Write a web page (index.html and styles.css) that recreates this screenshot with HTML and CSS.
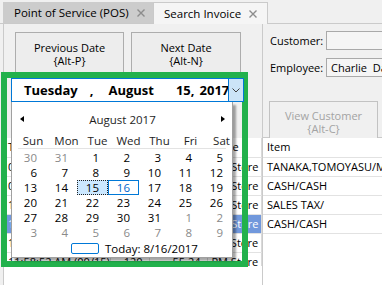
FILE: index.html
```html
<!DOCTYPE html>
<html lang="en">
<head>
    <meta charset="UTF-8">
    <title>Search Invoice</title>
    <link rel="stylesheet" href="styles.css">
</head>
<body>
    <!-- tab strip -->
    <div class="tabs">
        <div class="tab">
            <span>Point of Service (POS)</span>
            <svg class="close" width="8" height="8" viewBox="0 0 8 8"><path d="M0.5 0.5L7.5 7.5M7.5 0.5L0.5 7.5"/></svg>
        </div>
        <div class="tab active">
            <span>Search Invoice</span>
            <svg class="close" width="8" height="8" viewBox="0 0 8 8"><path d="M0.5 0.5L7.5 7.5M7.5 0.5L0.5 7.5"/></svg>
        </div>
    </div>

    <div class="main">
        <div class="left">
            <div class="toolbar">
                <button class="btn btn-prev">Previous Date<br>{Alt-P}</button>
                <button class="btn btn-next">Next Date<br>{Alt-N}</button>
            </div>
            <div class="grid-area">
                <div class="grid-clip">
                    <table class="grid invoices">
                        <colgroup>
                            <col class="c-time"><col class="c-qty"><col class="c-total"><col class="c-store">
                        </colgroup>
                        <tr class="head"><td>Time</td><td class="num">Qty</td><td class="num">Total</td><td>Store</td></tr>
                        <tr><td>09:02:11 AM (00/10)</td><td class="num">40</td><td class="num">12.10</td><td>AM Store</td></tr>
                        <tr><td>09:47:30 AM (00/11)</td><td class="num">65</td><td class="num">20.75</td><td>AM Store</td></tr>
                        <tr><td>10:15:04 AM (00/12)</td><td class="num">80</td><td class="num">31.40</td><td>AM Store</td></tr>
                        <tr class="selected"><td>11:03:46 AM (00/13)</td><td class="num">100</td><td class="num">44.00</td><td>AM Store</td></tr>
                        <tr><td>11:31:19 AM (00/14)</td><td class="num">110</td><td class="num">49.62</td><td>PM Store</td></tr>
                        <tr><td>11:58:52 AM (00/15)</td><td class="num">120</td><td class="num">55.24</td><td>PM Store</td></tr>
                    </table>
                </div>
            </div>
        </div>

        <div class="right">
            <div class="info">
                <div class="field">
                    <label>Customer:</label>
                    <div class="box"></div>
                </div>
                <div class="field">
                    <label>Employee:</label>
                    <div class="box">Charlie&nbsp; Davis</div>
                </div>
                <button class="btn btn-view" disabled>View Customer<br>{Alt-C}</button>
            </div>
            <div class="grid-area">
                <table class="grid items">
                    <tr class="head"><td>Item</td></tr>
                    <tr><td>TANAKA,TOMOYASU/MR</td></tr>
                    <tr><td>CASH/CASH</td></tr>
                    <tr><td>SALES TAX/</td></tr>
                    <tr><td>CASH/CASH</td></tr>
                </table>
            </div>
        </div>
    </div>

    <!-- green highlight frame -->
    <div class="highlight"></div>

    <!-- open date picker -->
    <div class="picker">
        <div class="datebox">
            <span class="d-day">Tuesday</span>
            <span class="d-comma">,</span>
            <span class="d-month">August</span>
            <span class="d-num">15,</span>
            <span class="d-year">2017</span>
            <div class="drop">
                <svg width="8" height="5" viewBox="0 0 8 5"><path d="M0.5 0.5L4 4L7.5 0.5"/></svg>
            </div>
        </div>
        <div class="cal">
            <div class="cal-head">
                <span class="arrow arrow-left"></span>
                <span class="title">August 2017</span>
                <span class="arrow arrow-right"></span>
            </div>
            <div class="days">
                <span>Sun</span><span>Mon</span><span>Tue</span><span>Wed</span><span>Thu</span><span>Fri</span><span>Sat</span>
            </div>
            <div class="dates">
                <span class="other">30</span><span class="other">31</span><span>1</span><span>2</span><span>3</span><span>4</span><span>5</span>
                <span>6</span><span>7</span><span>8</span><span>9</span><span>10</span><span>11</span><span>12</span>
                <span>13</span><span>14</span><span class="sel">15</span><span class="now">16</span><span>17</span><span>18</span><span>19</span>
                <span>20</span><span>21</span><span>22</span><span>23</span><span>24</span><span>25</span><span>26</span>
                <span>27</span><span>28</span><span>29</span><span>30</span><span>31</span><span class="other">1</span><span class="other">2</span>
                <span class="other">3</span><span class="other">4</span><span class="other">5</span><span class="other">6</span><span class="other">7</span><span class="other">8</span><span class="other">9</span>
            </div>
            <div class="today">
                <span class="today-box"></span>
                <span>Today: 8/16/2017</span>
            </div>
        </div>
    </div>
</body>
</html>
```

FILE: styles.css
```css
body {
    margin: 0;
    width: 382px;
    height: 285px;
    overflow: hidden;
    position: relative;
    background-color: #f0f0f0;
    font-family: "Open Sans", Arial, sans-serif;
    font-size: 11px;
    color: #000;
}

/* Tabs */
.tabs {
    display: flex;
    align-items: flex-end;
    height: 24px;
    box-sizing: border-box;
    padding-left: 3px;
    border-bottom: 1px solid #cacaca;
}

.tab {
    display: flex;
    align-items: center;
    justify-content: space-between;
    box-sizing: border-box;
    height: 21px;
    width: 150px;
    padding: 0 8px 0 11px;
    background-color: #cccccc;
    font-size: 11.5px;
}

.tab.active {
    width: 115px;
    height: 22px;
    margin-bottom: -1px;
    padding-right: 10px;
    background-color: #f5f5f5;
    border: 1px solid #cacaca;
    border-bottom: none;
    padding-left: 10px;
}

.close path {
    stroke: #8c8c8c;
    stroke-width: 1.4;
    fill: none;
}

/* Main area */
.main {
    display: flex;
    height: 261px;
    margin-left: 3px;
    border-left: 1px solid #cacaca;
}

.left {
    width: 258px;
    flex: none;
    display: flex;
    flex-direction: column;
}

.right {
    flex: 1;
    border-left: 1px solid #cacaca;
    overflow: hidden;
    display: flex;
    flex-direction: column;
}

.toolbar {
    display: flex;
    gap: 7px;
    align-items: flex-start;
    height: 114px;
    flex: none;
    box-sizing: border-box;
    padding: 8px 0 0 11px;
}

/* Buttons */
.btn {
    height: 43px;
    padding: 0;
    border: 1px solid #adadad;
    background-color: #ededed;
    font-family: inherit;
    font-size: 11px;
    line-height: 13px;
    color: #000;
    text-align: center;
}

.btn-prev {
    width: 109px;
}

.btn-next {
    width: 110px;
}

.btn-view {
    width: 109px;
    height: 41px;
    margin: 16px 0 0 -1px;
    border-color: #c2c2c2;
    background-color: #f0f0f0;
    color: #a3a3a3;
}

/* Customer panel */
.info {
    height: 114px;
    flex: none;
    box-sizing: border-box;
    padding: 7px 0 0 7px;
    border-bottom: 1px solid #cacaca;
}

.field {
    display: flex;
    align-items: center;
    height: 19px;
    margin-bottom: 8px;
}

.field label {
    width: 56px;
    flex: none;
}

.box {
    flex: none;
    width: 90px;
    height: 19px;
    box-sizing: border-box;
    border: 1px solid #a9a9a9;
    background-color: #f5f5f5;
    padding-left: 4px;
    line-height: 17px;
    white-space: nowrap;
}

/* Grids */
.grid-area {
    flex: 1;
    background-color: #fff;
    overflow: hidden;
}

.grid-clip {
    height: 128px;
    overflow: hidden;
}

.grid {
    border-collapse: collapse;
    table-layout: fixed;
    background-color: #fff;
    width: 100%;
}

.grid td {
    height: 19px;
    padding: 0 0 0 4px;
    border-bottom: 1px solid #e2e2e2;
    white-space: nowrap;
    overflow: hidden;
    box-sizing: border-box;
    line-height: 18px;
}

.invoices td {
    border-right: 1px solid #d9d9d9;
}

.invoices td.num {
    text-align: right;
    padding: 0 6px 0 0;
}

.c-time {
    width: 106px;
}

.c-qty {
    width: 39px;
}

.c-total {
    width: 58px;
}

.grid tr.selected td {
    background-color: #7198dc;
    color: #fff;
}

/* Green highlight frame */
.highlight {
    position: absolute;
    left: 1px;
    top: 72px;
    width: 247px;
    height: 195px;
    box-sizing: border-box;
    border: 6px solid #22b14c;
}

/* Date picker */
.picker {
    position: absolute;
    left: 11px;
    top: 78px;
    width: 233px;
}

.datebox {
    display: flex;
    align-items: center;
    height: 24px;
    box-sizing: border-box;
    border: 1px solid #0078d7;
    background-color: #fff;
    font-weight: bold;
    font-size: 13px;
    position: relative;
}

.d-day {
    margin-left: 12px;
}

.d-comma {
    margin-left: 12px;
}

.d-month {
    margin-left: 15px;
}

.d-num {
    margin-left: 22px;
}

.d-year {
    margin-left: 5px;
}

.drop {
    position: absolute;
    right: -1px;
    top: -1px;
    width: 16px;
    height: 24px;
    box-sizing: border-box;
    border: 1px solid #0078d7;
    background-color: #cce4f7;
    display: flex;
    align-items: center;
    justify-content: center;
}

.drop path {
    stroke: #404040;
    fill: none;
    stroke-width: 1;
}

.cal {
    width: 222px;
    height: 156px;
    box-sizing: border-box;
    border: 1px solid #a0a0a0;
    border-top: none;
    background-color: #fff;
    box-shadow: 3px 3px 2px rgba(0, 0, 0, 0.35);
    padding: 0 1px;
}

.cal-head {
    display: flex;
    align-items: center;
    justify-content: space-between;
    height: 30px;
    padding: 2px 6px 0 7px;
    color: #1e1e1e;
    font-size: 11.5px;
}

.arrow {
    width: 0;
    height: 0;
    border-top: 3.5px solid transparent;
    border-bottom: 3.5px solid transparent;
}

.arrow-left {
    border-right: 4px solid #000;
}

.arrow-right {
    border-left: 4px solid #000;
}

.days {
    display: grid;
    grid-template-columns: repeat(7, 31px);
    height: 14px;
    line-height: 14px;
    padding-left: 2px;
    color: #1e1e1e;
    font-size: 11.5px;
    text-align: center;
    border-bottom: 1px solid #e3e3e3;
    margin: 0 5px 1px 5px;
}

.days span:first-child {
    margin-left: -5px;
}

.dates {
    display: grid;
    grid-template-columns: repeat(7, 31px);
    grid-auto-rows: 15px;
    padding-left: 2px;
    font-size: 11.5px;
}

.dates span {
    box-sizing: border-box;
    text-align: right;
    padding-right: 9px;
    line-height: 15px;
}

.dates .other {
    color: #8a8a8a;
}

.dates .sel {
    background-color: #cce8ff;
    border: 1px dotted #222;
    line-height: 13px;
    padding-right: 8px;
}

.dates .now {
    border: 1px solid #0078d7;
    color: #0066cc;
    line-height: 13px;
    padding-right: 8px;
}

.today {
    display: flex;
    align-items: center;
    height: 16px;
    padding-left: 58px;
    font-size: 11.5px;
}

.today-box {
    width: 28px;
    height: 11px;
    box-sizing: border-box;
    border: 1px solid #0078d7;
    border-radius: 2px;
    margin-right: 6px;
}
```
